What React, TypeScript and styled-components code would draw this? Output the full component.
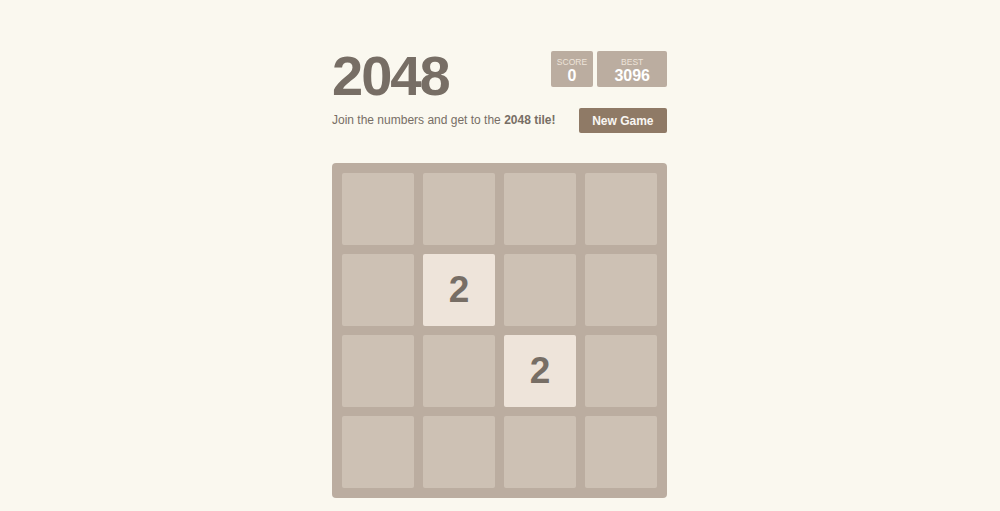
import React from 'react';
import styled, { createGlobalStyle } from 'styled-components';

const GlobalStyle = createGlobalStyle`
  html, body {
    margin: 0;
    padding: 0;
    background: #faf8ef;
    color: #776e65;
    font-family: "Liberation Sans", Arial, sans-serif;
  }
`;

const Container = styled.div`
  width: 335px;
  margin: 0 auto;
  padding: 48px 1px 0 0;
`;

const Header = styled.div`
  display: flex;
  justify-content: space-between;
  align-items: flex-start;
`;

const Title = styled.h1`
  margin: 0;
  font-size: 56px;
  line-height: 56px;
  letter-spacing: -2px;
  font-weight: bold;
  color: #776e65;
`;

const Scores = styled.div`
  display: flex;
  gap: 4px;
  margin-top: 3px;
`;

const ScoreBox = styled.div`
  height: 36px;
  box-sizing: border-box;
  padding: 5px 17px 0;
  background: #bbada0;
  border-radius: 2px;
  text-align: center;
  color: #fff;
`;

const ScoreLabel = styled.div`
  margin: 0 -17px;
  font-size: 8.5px;
  line-height: 12px;
  text-transform: uppercase;
  color: #eee4da;
  white-space: nowrap;
`;

const ScoreValue = styled.div`
  margin-top: -2px;
  font-size: 16px;
  line-height: 20px;
  font-weight: bold;
`;

const Intro = styled.div`
  display: flex;
  justify-content: space-between;
  align-items: center;
  margin-top: 4px;
`;

const Tagline = styled.p`
  margin: 0;
  font-size: 12px;
  line-height: 25px;
  color: #776e65;
`;

const NewGame = styled.button`
  height: 25px;
  padding: 0 13.5px;
  border: none;
  border-radius: 2px;
  background: #8f7a66;
  color: #f9f6f2;
  font-family: inherit;
  font-size: 12px;
  font-weight: bold;
  cursor: pointer;
`;

const Board = styled.div`
  margin-top: 30px;
  padding: 10px;
  display: grid;
  grid-template-columns: repeat(4, 72px);
  grid-auto-rows: 72px;
  gap: 9px;
  background: #bbada0;
  border-radius: 4px;
`;

const Cell = styled.div<{ $value?: number }>`
  border-radius: 2px;
  background: ${p => (p.$value ? '#eee4da' : '#cdc1b4')};
  color: #776e65;
  display: flex;
  align-items: center;
  justify-content: center;
  font-size: 37px;
  font-weight: bold;
`;

const grid = [
  [0, 0, 0, 0],
  [0, 2, 0, 0],
  [0, 0, 2, 0],
  [0, 0, 0, 0],
];

export default function App() {
  return (
    <>
      <GlobalStyle />
      <Container>
        <Header>
          <Title>2048</Title>
          <Scores>
            <ScoreBox>
              <ScoreLabel>Score</ScoreLabel>
              <ScoreValue>0</ScoreValue>
            </ScoreBox>
            <ScoreBox>
              <ScoreLabel>Best</ScoreLabel>
              <ScoreValue>3096</ScoreValue>
            </ScoreBox>
          </Scores>
        </Header>
        <Intro>
          <Tagline>
            Join the numbers and get to the <strong>2048 tile!</strong>
          </Tagline>
          <NewGame>New Game</NewGame>
        </Intro>
        <Board>
          {grid.flat().map((v, i) => (
            <Cell key={i} $value={v}>
              {v ? v : null}
            </Cell>
          ))}
        </Board>
      </Container>
    </>
  );
}
